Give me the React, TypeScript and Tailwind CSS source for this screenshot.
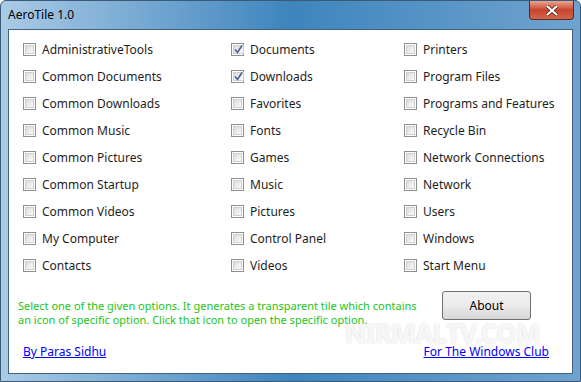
const cols: { x: string; items: { label: string; checked?: boolean }[] }[] = [
  {
    x: "w-[208px]",
    items: [
      { label: "AdministrativeTools" },
      { label: "Common Documents" },
      { label: "Common Downloads" },
      { label: "Common Music" },
      { label: "Common Pictures" },
      { label: "Common Startup" },
      { label: "Common Videos" },
      { label: "My Computer" },
      { label: "Contacts" },
    ],
  },
  {
    x: "w-[173px]",
    items: [
      { label: "Documents", checked: true },
      { label: "Downloads", checked: true },
      { label: "Favorites" },
      { label: "Fonts" },
      { label: "Games" },
      { label: "Music" },
      { label: "Pictures" },
      { label: "Control Panel" },
      { label: "Videos" },
    ],
  },
  {
    x: "flex-1",
    items: [
      { label: "Printers" },
      { label: "Program Files" },
      { label: "Programs and Features" },
      { label: "Recycle Bin" },
      { label: "Network Connections" },
      { label: "Network" },
      { label: "Users" },
      { label: "Windows" },
      { label: "Start Menu" },
    ],
  },
];

const Check = ({ checked }: { checked?: boolean }) => (
  <span className="w-[13px] h-[13px] shrink-0 border border-[#8e8f8f] bg-white p-[1px] flex">
    <span className="flex-1 bg-gradient-to-br from-[#dcdcdc] to-[#fbfbfb] border border-[#cfcfcf] flex items-center justify-center">
      {checked && (
        <svg width="9" height="9" viewBox="0 0 9 9">
          <path d="M1 4.5 L3.5 7.5 L8 0.5" fill="none" stroke="#4a5f97" strokeWidth="1.6" />
        </svg>
      )}
    </span>
  </span>
);

export default function App() {
  return (
    <div
      className="w-[581px] h-[382px] rounded-t-[6px] flex flex-col border border-[#3c5a78] bg-gradient-to-r from-[#a9cbe6] via-[#3d85bd] to-[#6fa3cf] overflow-hidden"
      style={{ fontFamily: '"Noto Sans", "Open Sans", sans-serif' }}
    >
      <div className="h-[28px] flex items-start justify-between shrink-0">
        <span className="pl-[7px] pt-[6px] text-[12px] leading-[16px] text-black">AeroTile 1.0</span>
        <div className="mr-[6px] w-[45px] h-[19px] rounded-b-[4px] border border-t-0 border-[#5a2a22] bg-gradient-to-b from-[#e7a593] via-[#c8432c] to-[#d2664c] flex items-center justify-center">
          <svg width="14" height="11" viewBox="0 0 14 11">
            <path d="M2 1 L12 10 M12 1 L2 10" stroke="#3b1d18" strokeWidth="3.4" />
            <path d="M2 1 L12 10 M12 1 L2 10" stroke="#ffffff" strokeWidth="2.2" />
          </svg>
        </div>
      </div>
      <div className="flex-1 mx-[7px] mb-[7px] border border-[#44607a] bg-white relative">
        <div className="flex pl-[14px] pt-[6px] text-[12px] text-[#1e1e1e]">
          {cols.map((c, i) => (
            <div key={i} className={`${c.x} flex flex-col`}>
              {c.items.map((it) => (
                <label key={it.label} className="h-[27px] flex items-center gap-[6px]">
                  <Check checked={it.checked} />
                  <span>{it.label}</span>
                </label>
              ))}
            </div>
          ))}
        </div>
        <div className="flex items-start justify-between mt-[12px] pl-[9px] pr-[41px]">
          <p className="pt-[8px] text-[11px] leading-[14px] text-[#22c422] w-[400px]">
            Select one of the given options. It generates a transparent tile which contains an icon of specific option. Click that icon to open the specific option.
          </p>
          <button className="w-[89px] h-[29px] rounded-[3px] border border-[#707070] bg-gradient-to-b from-[#f2f2f2] via-[#ebebeb] to-[#d6d6d6] text-[12px] text-black">
            About
          </button>
        </div>
        <div className="flex justify-between pl-[14px] pr-[23px] mt-[16px] text-[12px]">
          <a className="text-[#0000ff] underline">By Paras Sidhu</a>
          <a className="text-[#0000ff] underline">For The Windows Club</a>
        </div>
        <div className="absolute left-[336px] top-[290px] text-[26px] font-bold text-white/80 [text-shadow:0_0_2px_#d0d0d0] tracking-tight leading-none pointer-events-none">
          NIRMALTV.COM
        </div>
      </div>
    </div>
  );
}
